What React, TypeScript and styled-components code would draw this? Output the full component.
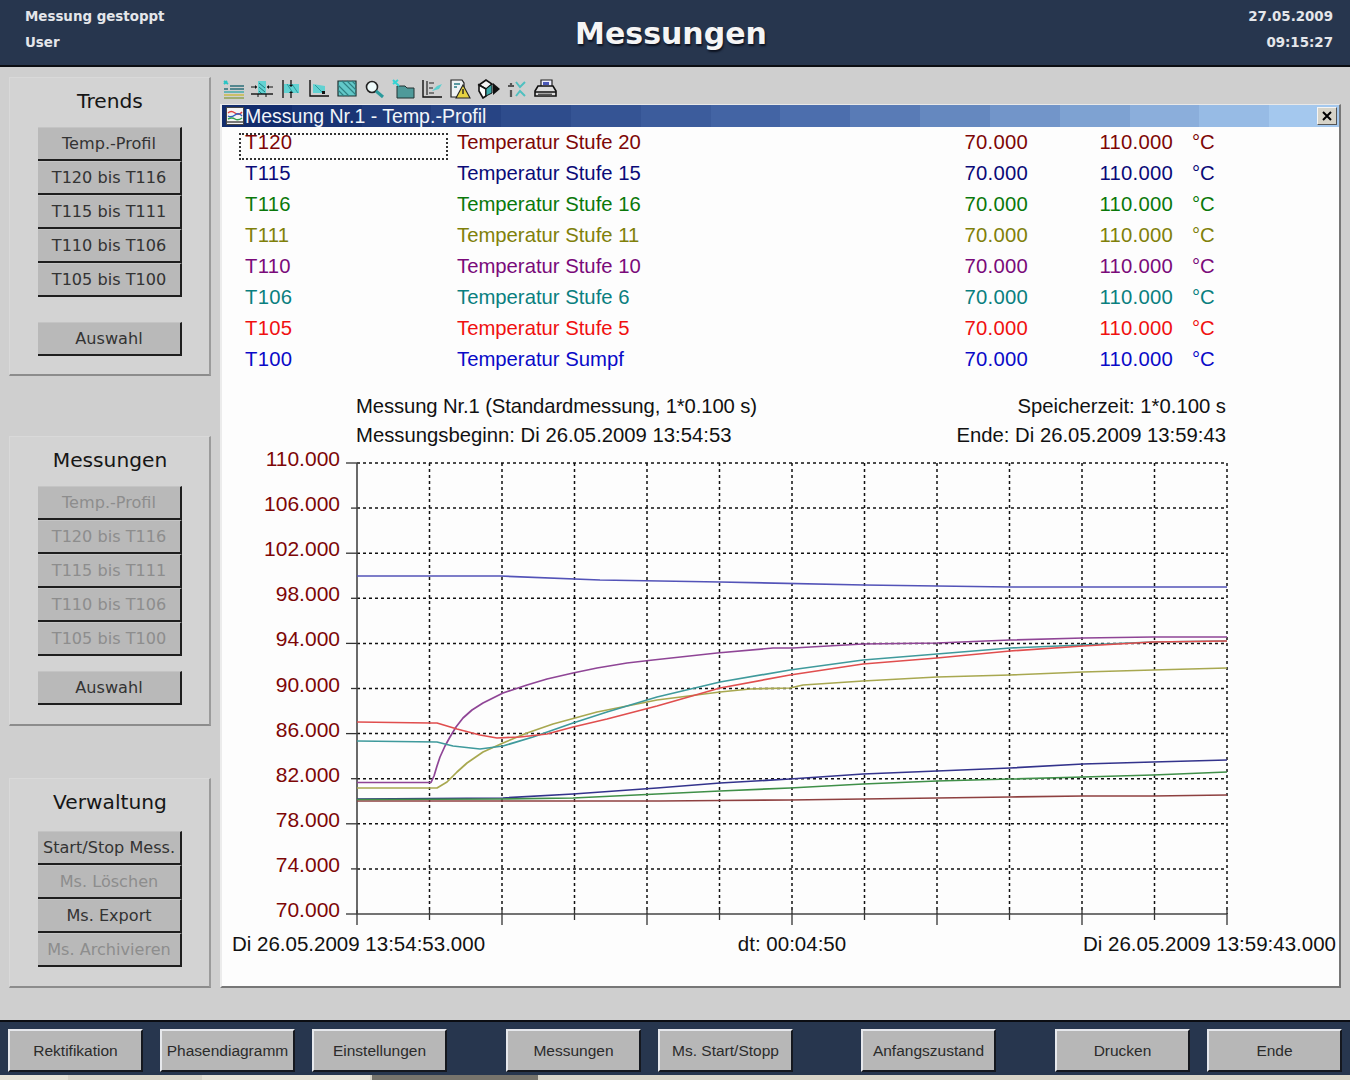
import React from "react";
import styled, { createGlobalStyle } from "styled-components";

const GlobalStyle = createGlobalStyle`
  html, body {
    margin: 0;
    padding: 0;
    background: #cfcfcf;
  }
`;

const UI_FONT = `"DejaVu Sans", Verdana, sans-serif`;
const ARIAL = `"Liberation Sans", Arial, sans-serif`;

interface Channel {
  tag: string;
  label: string;
  color: string;
  line: string;
  points: string;
}

const CHANNELS: Channel[] = [
  {
    tag: "T120", label: "Temperatur Stufe 20", color: "#7d0606", line: "#8e4040",
    points: "357,801 660,801 720,800.5 790,800 863,799 937,798 1010,797 1083,796 1153,796 1227,795",
  },
  {
    tag: "T115", label: "Temperatur Stufe 15", color: "#0a0a78", line: "#33338c",
    points: "357,799 503,798 573,794 657,788 720,783 790,779 863,774 937,771 1010,768 1083,764 1153,762 1227,760",
  },
  {
    tag: "T116", label: "Temperatur Stufe 16", color: "#0a780a", line: "#3f8f48",
    points: "357,799.5 503,799 573,798 657,794 720,791 790,788 863,784 937,781 1010,779 1083,777 1153,775 1227,772",
  },
  {
    tag: "T111", label: "Temperatur Stufe 11", color: "#80800a", line: "#a8a850",
    points: "357,788 437,788 447,782 457,772 467,763 483,752 503,743 527,733 553,724 597,712 657,700 720,692 750,689 790,688 803,685 863,681 937,677 1010,675 1083,672 1153,670 1227,668",
  },
  {
    tag: "T110", label: "Temperatur Stufe 10", color: "#7a0a7a", line: "#8f4596",
    points: "357,782.5 431,782.5 434,776 437,766 440,757 445,746 450,737 456,727 463,718 472,710 483,703 503,693 527,685 547,679 573,673 597,668 627,663 653,660 717,653 773,648 793,648 863,644 937,643 1010,640 1083,638 1153,637 1227,637",
  },
  {
    tag: "T106", label: "Temperatur Stufe 6", color: "#0a7f7f", line: "#3f9a9c",
    points: "357,741 437,742 453,746 480,749 503,746 533,737 573,723 607,712 657,697 720,682 790,670 863,660 937,654 1010,648 1083,645 1153,642 1227,641",
  },
  {
    tag: "T105", label: "Temperatur Stufe 5", color: "#f01010", line: "#e04e4e",
    points: "357,722 430,723 437,723 457,729 480,735 497,738 520,737 547,734 573,727 607,719 657,706 720,688 790,675 863,664 937,658 1010,651 1083,646 1153,642 1227,641",
  },
  {
    tag: "T100", label: "Temperatur Sumpf", color: "#0a0ac8", line: "#5353b8",
    points: "357,576 500,576 600,580 720,582 864,585 1010,587 1082,587 1227,587",
  },
];

const TREND_BUTTONS = ["Temp.-Profil", "T120 bis T116", "T115 bis T111", "T110 bis T106", "T105 bis T100"];

const FOOTER_BUTTONS = [
  { label: "Rektifikation", gap: 0 },
  { label: "Phasendiagramm", gap: 17 },
  { label: "Einstellungen", gap: 17 },
  { label: "Messungen", gap: 59 },
  { label: "Ms. Start/Stopp", gap: 17 },
  { label: "Anfangszustand", gap: 68 },
  { label: "Drucken", gap: 59 },
  { label: "Ende", gap: 17 },
];

const Y_VALUES = ["110.000", "106.000", "102.000", "98.000", "94.000", "90.000", "86.000", "82.000", "78.000", "74.000", "70.000"];
const PLOT = { left: 357, right: 1227, top: 463, bottom: 914 };
const stepY = (PLOT.bottom - PLOT.top) / 10;
const stepX = (PLOT.right - PLOT.left) / 12;

// the title bar of the reference fades in visible bands, not smoothly
const titleBands = () => {
  const from = [18, 44, 108];
  const mid = [70, 104, 168];
  const to = [164, 200, 238];
  const count = 16;
  const stops: string[] = [];
  for (let i = 0; i < count; i++) {
    const t = i / (count - 1);
    const a = t < 0.5 ? from : mid;
    const b = t < 0.5 ? mid : to;
    const k = t < 0.5 ? t * 2 : (t - 0.5) * 2;
    const rgb = a.map((v, n) => Math.round(v + (b[n] - v) * k)).join(",");
    stops.push(`rgb(${rgb}) ${(i / count) * 100}% ${((i + 1) / count) * 100}%`);
  }
  return `linear-gradient(90deg, ${stops.join(", ")})`;
};

const Page = styled.div`
  width: 1350px;
  height: 1080px;
  display: flex;
  flex-direction: column;
  overflow: hidden;
  background: #cfcfcf;
`;

const Header = styled.header`
  height: 67px;
  flex: none;
  box-sizing: border-box;
  border-bottom: 2px solid #0b0d12;
  background: #27364e;
  display: grid;
  grid-template-columns: 1fr auto 1fr;
  padding: 0 17px 0 25px;
  color: #e4e6ea;
  font-family: ${UI_FONT};
  font-weight: bold;
  font-size: 13.4px;
`;

const HeaderColumn = styled.div<{ $right?: boolean }>`
  display: flex;
  flex-direction: column;
  padding-top: 4px;
  line-height: 26px;
  text-align: ${(p) => (p.$right ? "right" : "left")};
`;

const HeaderTitle = styled.h1`
  margin: 0 16px 0 0;
  font-size: 30px;
  line-height: 67px;
  font-weight: bold;
  color: #f5f5f5;
  text-shadow: 1px 2px 2px #0c1220;
`;

const Body = styled.div`
  flex: 1;
  display: flex;
  min-height: 0;
`;

const Sidebar = styled.aside`
  width: 220px;
  flex: none;
  box-sizing: border-box;
  padding: 10px 0 0 9px;
  display: flex;
  flex-direction: column;
`;

const Panel = styled.section<{ $height: number; $gap?: number }>`
  width: 202px;
  height: ${(p) => p.$height}px;
  flex: none;
  margin-top: ${(p) => p.$gap ?? 0}px;
  box-sizing: border-box;
  background: #d3d3d3;
  border-right: 2px solid #9b9b9b;
  border-bottom: 2px solid #8c8c8c;
  border-top: 1px solid #d9d9d9;
  border-left: 1px solid #d9d9d9;
  display: flex;
  flex-direction: column;
  align-items: flex-start;
  padding-left: 28px;
`;

const PanelTitle = styled.h2<{ $extra?: number }>`
  width: 144px;
  margin: 0 0 ${(p) => 2 + (p.$extra ?? 0)}px;
  font-family: ${UI_FONT};
  font-weight: normal;
  font-size: 20.2px;
  line-height: 47px;
  text-align: center;
  color: #161616;
`;

const SideButton = styled.button<{ $spaced?: number }>`
  width: 144px;
  height: 34px;
  flex: none;
  margin: ${(p) => p.$spaced ?? 0}px 0 0;
  padding: 0;
  box-sizing: border-box;
  background: #b9b9b9;
  border: 0;
  border-right: 2px solid #1e1e1e;
  border-bottom: 2px solid #1e1e1e;
  border-top: 1px solid #c4c4c4;
  font-family: ${UI_FONT};
  font-size: 16.1px;
  color: #333;
  &:disabled {
    color: #8d8d8d;
  }
`;

const Workspace = styled.main`
  flex: 1;
  min-width: 0;
  display: flex;
  flex-direction: column;
`;

const Toolbar = styled.div`
  height: 37px;
  flex: none;
  box-sizing: border-box;
  padding: 12px 0 0 2px;
  display: flex;
  align-items: flex-start;
  gap: 4.3px;
`;

const ToolIcon = styled.svg`
  width: 24px;
  height: 20px;
  flex: none;
`;

const Window = styled.div`
  width: 1121px;
  height: 884px;
  flex: none;
  box-sizing: border-box;
  background: #fdfdfd;
  border-top: 1px solid #e8e8e8;
  border-left: 2px solid #ececec;
  border-right: 2px solid #777;
  border-bottom: 2px solid #777;
  display: flex;
  flex-direction: column;
  font-family: ${ARIAL};
  font-size: 20.3px;
`;

const TitleBar = styled.div`
  height: 22px;
  flex: none;
  display: flex;
  align-items: center;
  padding: 0 2px 0 4px;
  background: ${titleBands()};
  color: #f2f5fa;
  font-size: 19.5px;
  white-space: pre;
`;

const TitleIcon = styled.svg`
  width: 18px;
  height: 18px;
  flex: none;
  margin-right: 1px;
`;

const TitleText = styled.span`
  flex: 1;
`;

const CloseButton = styled.div`
  width: 20px;
  height: 18px;
  box-sizing: border-box;
  background: #d6d3c8;
  border: 1px solid;
  border-color: #f5f5f5 #555 #555 #f5f5f5;
  display: flex;
  align-items: center;
  justify-content: center;
`;

const Legend = styled.div`
  position: relative;
  flex: none;
  padding: 0.5px 0 0 23px;
  display: flex;
  flex-direction: column;
`;

const LegendRow = styled.div<{ $color: string }>`
  height: 30.9px;
  display: grid;
  grid-template-columns: 212px 471px 100px 145px auto;
  align-items: center;
  color: ${(p) => p.$color};
`;

const TagCell = styled.span`
  letter-spacing: 0.3px;
`;

const RightCell = styled.span`
  text-align: right;
  letter-spacing: 0.25px;
`;

const UnitCell = styled.span`
  margin-left: 19px;
`;

const FocusBox = styled.div`
  position: absolute;
  left: 17px;
  top: 6px;
  width: 209px;
  height: 27px;
  box-sizing: border-box;
  border: 2px dotted #333;
`;

const InfoBlock = styled.div`
  flex: none;
  margin-top: 16px;
  padding: 0 113px 0 134px;
  color: #111;
`;

const InfoRow = styled.div<{ $height: number }>`
  height: ${(p) => p.$height}px;
  display: flex;
  align-items: center;
  justify-content: space-between;
`;

const TightText = styled.span`
  letter-spacing: -0.12px;
`;

const ChartSvg = styled.svg`
  display: block;
  flex: none;
  width: 1117px;
  height: 482px;
  margin-top: -6px;
  font-family: ${ARIAL};
  font-size: 21px;
`;

const TimeRow = styled.div`
  flex: none;
  display: grid;
  grid-template-columns: 1fr auto 1fr;
  margin-top: 4px;
  padding: 0 3px 0 10px;
  line-height: 28px;
  font-size: 20.5px;
  color: #111;
`;

const TimeEnd = styled.span`
  text-align: right;
`;

const TimeMid = styled.span`
  margin-right: -16px;
`;

const Footer = styled.footer`
  flex: none;
  height: 55px;
  box-sizing: border-box;
  background: #27364e;
  border-top: 2px solid #0b0d12;
  padding: 7px 0 0 8px;
  display: flex;
  align-items: flex-start;
`;

const FooterButton = styled.button<{ $gap: number }>`
  width: 135px;
  height: 43px;
  flex: none;
  margin: 0 0 0 ${(p) => p.$gap}px;
  padding: 0;
  box-sizing: border-box;
  background: #b7b7b7;
  border: 2px solid;
  border-color: #e6e8ec #15181f #15181f #e6e8ec;
  font-family: ${ARIAL};
  font-size: 15.5px;
  color: #2b2b2b;
`;

const TaskStrip = styled.div`
  flex: none;
  height: 5px;
  display: flex;
  gap: 2px;
  background: #d8d4c8;
`;

const TaskItem = styled.div<{ $width: number; $tone?: string }>`
  width: ${(p) => p.$width}px;
  flex: none;
  background: ${(p) => p.$tone ?? "#e6e2d6"};
`;

const ToolbarIcons = () => (
  <>
    <ToolIcon viewBox="0 0 24 20">
      <path d="M2 2l4 3M2 5l3-3" stroke="#27c4c4" strokeWidth="2" />
      <path d="M8 7h14M2 10h4M8 10h14" stroke="#2b6f7a" strokeWidth="1.4" />
      <path d="M2 13h20" stroke="#3aa8a8" strokeWidth="1.4" />
      <path d="M2 16h20" stroke="#c8b83a" strokeWidth="1.4" />
      <path d="M2 19h20" stroke="#8aa04a" strokeWidth="1.4" />
    </ToolIcon>
    <ToolIcon viewBox="0 0 24 20">
      <path d="M8 2h8v13H8z" fill="#62d2d2" />
      <path d="M9 4l6 5M9 8l6 5M9 12l3 3" stroke="#1e7f80" strokeWidth="1" />
      <path d="M1 15h22" stroke="#111" strokeWidth="1.4" />
      <path d="M1 8h6M17 8h6" stroke="#111" strokeWidth="1.2" />
      <path d="M7 8l-2-2v4zM17 8l2-2v4z" fill="#111" />
      <path d="M8 15v3M16 15v3" stroke="#111" strokeWidth="1" />
    </ToolIcon>
    <ToolIcon viewBox="0 0 24 20">
      <path d="M5 5h15v9H5z" fill="#62d2d2" />
      <path d="M8 5l6 9M13 5l6 9" stroke="#2a9a9c" strokeWidth="1" />
      <path d="M4 1v18M12 1v6M12 13v6" stroke="#111" strokeWidth="1.3" />
      <path d="M12 8l-2-2h4zM12 12l-2 2h4z" fill="#111" />
    </ToolIcon>
    <ToolIcon viewBox="0 0 24 20">
      <path d="M3 1v16h19" fill="none" stroke="#111" strokeWidth="1.4" />
      <path d="M6 5l12 2v7H6z" fill="#62d2d2" />
      <path d="M8 6l8 8" stroke="#2a9a9c" strokeWidth="1" />
      <rect x="15" y="12" width="3" height="3" fill="#111" />
    </ToolIcon>
    <ToolIcon viewBox="0 0 24 20">
      <path d="M3 2h18v15H3z" fill="#62c8c8" stroke="#1f2f2f" strokeWidth="1.2" />
      <path d="M3 6l11 11M3 11l6 6M7 2l14 14M12 2l9 9M17 2l4 4" stroke="#2f8083" strokeWidth="1.1" />
    </ToolIcon>
    <ToolIcon viewBox="0 0 24 20">
      <circle cx="9" cy="8" r="5.5" fill="#eefafa" stroke="#222" strokeWidth="1.6" />
      <path d="M13 12l7 6" stroke="#2a9a9c" strokeWidth="3" />
    </ToolIcon>
    <ToolIcon viewBox="0 0 24 20">
      <path d="M5 7h8l2 2h7v10H5z" fill="#4f9a9a" stroke="#233" strokeWidth="1" />
      <path d="M1 1l6 6M1 5l5-4" stroke="#34d4d4" strokeWidth="2" />
    </ToolIcon>
    <ToolIcon viewBox="0 0 24 20">
      <path d="M3 1v17h19" fill="none" stroke="#111" strokeWidth="1.4" />
      <path d="M7 2v14" stroke="#222" strokeWidth="1.2" />
      <path d="M9 4h5M9 9h4M9 14h5" stroke="#222" strokeWidth="1.2" />
      <path d="M12 12l5-5 5-2-3 5z" fill="#5cd0d0" />
    </ToolIcon>
    <ToolIcon viewBox="0 0 24 20">
      <path d="M3 1h11l2 3v14H3z" fill="#eef2f4" stroke="#222" strokeWidth="1.2" />
      <path d="M6 5h6M6 8h3" stroke="#2a7c86" strokeWidth="1.6" />
      <path d="M15 6l7 13H8z" fill="#e6d242" stroke="#222" strokeWidth="1.1" />
      <path d="M15 10v5" stroke="#222" strokeWidth="1.4" />
    </ToolIcon>
    <ToolIcon viewBox="0 0 24 20">
      <path d="M2 6l7-5 6 4-6 5z" fill="#f4f4f4" stroke="#111" strokeWidth="1.6" />
      <path d="M2 6v6l4 7 3-2v-7z" fill="#fff" stroke="#111" strokeWidth="1.6" />
      <path d="M9 10l6-5v9l-6 3z" fill="#38a8a8" stroke="#111" strokeWidth="1" />
      <path d="M16 4l7 6-7 6z" fill="#111" />
    </ToolIcon>
    <ToolIcon viewBox="0 0 24 20">
      <path d="M3 7h6M6 4v3M6 11v7" stroke="#555" strokeWidth="2.2" />
      <path d="M11 3l4 5 5-5M11 17l4-5 5 5" fill="none" stroke="#4fc0c0" strokeWidth="2" />
    </ToolIcon>
    <ToolIcon viewBox="0 0 24 20">
      <path d="M8 1h11v8H8z" fill="#eef" stroke="#222" strokeWidth="1.2" />
      <path d="M10 3h6v3h-6z" fill="#4a58b8" />
      <path d="M5 7h15l3 5v5H2v-5z" fill="#dcdcdc" stroke="#111" strokeWidth="1.6" />
      <path d="M2 13h21" stroke="#111" strokeWidth="1.5" />
      <path d="M5 15.5h14" stroke="#555" strokeWidth="1.8" />
    </ToolIcon>
  </>
);

const Chart = () => {
  const rows = Y_VALUES.map((value, i) => ({ value, y: PLOT.top + i * stepY, major: i % 2 === 0 }));
  const columns = Array.from({ length: 13 }, (_, i) => ({ x: PLOT.left + i * stepX, long: i % 2 === 0 }));

  return (
    <ChartSvg viewBox="222 444 1117 482">
      {rows.map((r) => (
        <g key={r.value}>
          <text x="340" y={r.y + 3} textAnchor="end" fill="#7d0606">{r.value}</text>
          <line x1={r.major ? 346 : 351} x2={PLOT.left} y1={r.y} y2={r.y} stroke="#333" strokeWidth="1.3" />
          {r.y < PLOT.bottom - 1 && (
            <line x1={PLOT.left} x2={PLOT.right} y1={r.y} y2={r.y} stroke="#111" strokeWidth="1.5" strokeDasharray="3 3" />
          )}
        </g>
      ))}
      {columns.map((c) => (
        <g key={c.x}>
          {c.x > PLOT.left && (
            <line x1={c.x} x2={c.x} y1={PLOT.top} y2={PLOT.bottom} stroke="#111" strokeWidth="1.5" strokeDasharray="3 3" />
          )}
          <line x1={c.x} x2={c.x} y1={PLOT.bottom - 4} y2={c.long ? 925 : 920} stroke="#333" strokeWidth="1.3" />
        </g>
      ))}
      <line x1={PLOT.left} x2={PLOT.left} y1={PLOT.top} y2={PLOT.bottom} stroke="#444" strokeWidth="1.6" />
      <line x1={PLOT.left} x2={PLOT.right} y1={PLOT.bottom} y2={PLOT.bottom} stroke="#444" strokeWidth="1.4" />
      {CHANNELS.map((c) => (
        <polyline key={c.tag} points={c.points} fill="none" stroke={c.line} strokeWidth="1.7" strokeLinejoin="round" />
      ))}
    </ChartSvg>
  );
};

export default function App() {
  return (
    <Page>
      <GlobalStyle />
      <Header>
        <HeaderColumn>
          <span>Messung gestoppt</span>
          <span>User</span>
        </HeaderColumn>
        <HeaderTitle>Messungen</HeaderTitle>
        <HeaderColumn $right>
          <span>27.05.2009</span>
          <span>09:15:27</span>
        </HeaderColumn>
      </Header>
      <Body>
        <Sidebar>
          <Panel $height={299}>
            <PanelTitle>Trends</PanelTitle>
            {TREND_BUTTONS.map((label) => (
              <SideButton key={label}>{label}</SideButton>
            ))}
            <SideButton $spaced={25}>Auswahl</SideButton>
          </Panel>
          <Panel $height={290} $gap={60}>
            <PanelTitle>Messungen</PanelTitle>
            {TREND_BUTTONS.map((label) => (
              <SideButton key={label} disabled>{label}</SideButton>
            ))}
            <SideButton $spaced={15}>Auswahl</SideButton>
          </Panel>
          <Panel $height={210} $gap={52}>
            <PanelTitle $extra={3}>Verwaltung</PanelTitle>
            <SideButton>Start/Stop Mess.</SideButton>
            <SideButton disabled>Ms. Löschen</SideButton>
            <SideButton>Ms. Export</SideButton>
            <SideButton disabled>Ms. Archivieren</SideButton>
          </Panel>
        </Sidebar>
        <Workspace>
          <Toolbar>
            <ToolbarIcons />
          </Toolbar>
          <Window>
            <TitleBar>
              <TitleIcon viewBox="0 0 18 18">
                <rect x="0.5" y="0.5" width="17" height="17" fill="#f4f4f4" stroke="#444" />
                <path d="M2 6q3-3 7 0t7-1" fill="none" stroke="#e04040" strokeWidth="1.4" />
                <path d="M2 9q3 2 7-1t7 1" fill="none" stroke="#3060c0" strokeWidth="1.4" />
                <path d="M2 12q4-2 7 0t7-1" fill="none" stroke="#30a050" strokeWidth="1.4" />
                <path d="M1 15h16" stroke="#777" strokeWidth="2" />
              </TitleIcon>
              <TitleText>Messung Nr.1 - Temp.-Profil</TitleText>
              <CloseButton>
                <svg width="12" height="12" viewBox="0 0 12 12">
                  <path d="M2 2l8 8M10 2l-8 8" stroke="#000" strokeWidth="2" />
                </svg>
              </CloseButton>
            </TitleBar>
            <Legend>
              <FocusBox />
              {CHANNELS.map((c) => (
                <LegendRow key={c.tag} $color={c.color}>
                  <TagCell>{c.tag}</TagCell>
                  <span>{c.label}</span>
                  <RightCell>70.000</RightCell>
                  <RightCell>110.000</RightCell>
                  <UnitCell>°C</UnitCell>
                </LegendRow>
              ))}
            </Legend>
            <InfoBlock>
              <InfoRow $height={30.8}>
                <TightText>Messung Nr.1 (Standardmessung, 1*0.100 s)</TightText>
                <span>Speicherzeit: 1*0.100 s</span>
              </InfoRow>
              <InfoRow $height={28.8}>
                <span>Messungsbeginn: Di 26.05.2009 13:54:53</span>
                <span>Ende: Di 26.05.2009 13:59:43</span>
              </InfoRow>
            </InfoBlock>
            <Chart />
            <TimeRow>
              <span>Di 26.05.2009 13:54:53.000</span>
              <TimeMid>dt: 00:04:50</TimeMid>
              <TimeEnd>Di 26.05.2009 13:59:43.000</TimeEnd>
            </TimeRow>
          </Window>
        </Workspace>
      </Body>
      <Footer>
        {FOOTER_BUTTONS.map((b) => (
          <FooterButton key={b.label} $gap={b.gap}>{b.label}</FooterButton>
        ))}
      </Footer>
      <TaskStrip>
        <TaskItem $width={68} />
        <TaskItem $width={130} $tone="#d8d4c8" />
        <TaskItem $width={168} />
        <TaskItem $width={166} $tone="#77746c" />
        <TaskItem $width={340} $tone="#d8d4c8" />
      </TaskStrip>
    </Page>
  );
}
